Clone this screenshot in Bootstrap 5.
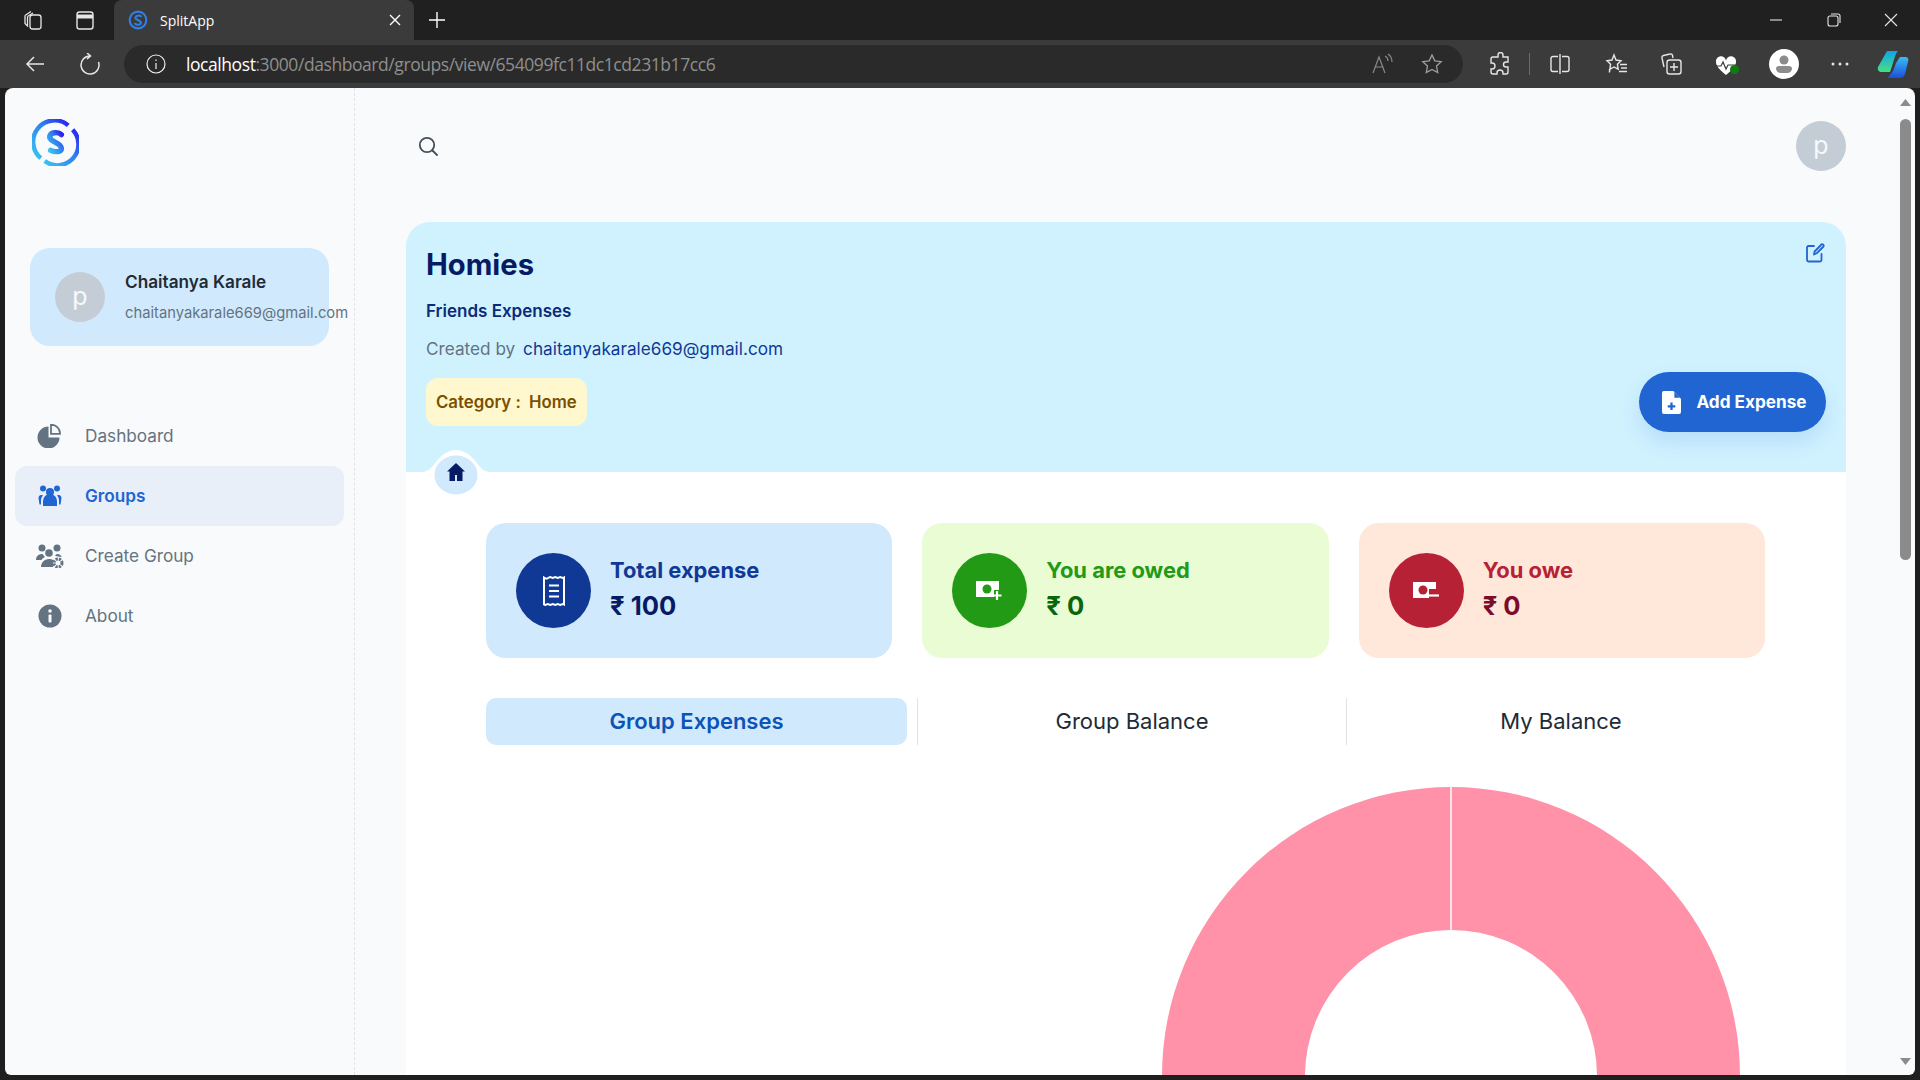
<!DOCTYPE html>
<html lang="en">
<head>
    <meta charset="UTF-8">
    <meta name="viewport" content="width=device-width, initial-scale=1">
    <title>SplitApp</title>
    <link href="https://cdn.jsdelivr.net/npm/bootstrap@5.3.0/dist/css/bootstrap.min.css" rel="stylesheet">
    <style>
        html, body { height: 1080px; overflow: hidden; }
        body { background: #1f1f1f; font-family: Inter, "Noto Sans", sans-serif; color: #212b36; }

        /* browser chrome */
        .tab-strip { height: 40px; background: #202020; color: #fff; font-family: "Open Sans", sans-serif; }
        .strip-btn { width: 22px; height: 22px; color: #e6e6e6; flex: none; }
        .sb-a { margin-left: 22px; }
        .sb-b { margin-left: 30px; }
        .browser-tab { width: 300px; height: 40px; margin-left: 18px; padding: 0 12px 0 14px; background: #3b3b3b; border-radius: 8px 8px 0 0; font-size: 14px; }
        .tab-title { margin-left: 12px; }
        .tab-new { margin-left: 14px; }
        .win-btns { margin-left: auto; width: 151px; padding-right: 22px; color: #e6e6e6; }
        .tool-bar { height: 48px; background: #3b3b3b; color: #e6e6e6; }
        .tb-back { margin-left: 24px; }
        .tb-reload { margin-left: 33px; }
        .addr-bar { width: 1339px; height: 38px; margin-left: 23px; padding: 0 14px 0 22px; background: #2a2a2a; border-radius: 19px; font-family: "Open Sans", sans-serif; font-size: 17.5px; letter-spacing: -.43px; color: #8f8f8f; }
        .addr-bar b { font-weight: 400; color: #fff; }
        .addr-info { margin-right: 20px; flex: none; }
        .addr-star { margin-left: 28px; margin-right: 6px; }
        .tool-set { width: 455px; }
        .ts-ext { margin-left: 24px; }
        .ts-sep { width: 1px; height: 22px; background: #6a6a6a; margin-left: 18px; }
        .ts-split { margin-left: 19px; }
        .ts-fav { margin-left: 34px; }
        .ts-coll { margin-left: 32px; }
        .ts-heart { margin-left: 32px; width: 24px; height: 24px; }
        .heart-ok { right: 0; bottom: 2px; width: 9px; height: 9px; background: #107c10; }
        .ts-prof { margin-left: 30px; width: 30px; height: 30px; }
        .ts-dots { margin-left: 32px; }
        .ts-copilot { margin-left: 28px; }

        /* page */
        .page-view { height: 987px; margin: 0 5px; background: #f9fafb; border-radius: 8px 8px 6px 6px; overflow: hidden; }
        .side-col { width: 350px; flex: none; border-right: 1px dashed #dfe3e8; }
        .brand-mark { display: block; margin: 31px 0 0 27px; }
        .user-box { width: 299px; height: 98px; margin: 82px 0 0 25px; padding-left: 25px; background: #d1e9fc; border-radius: 20px; }
        .ava { width: 50px; height: 50px; background: #c4cdd5; color: #f8f9fa; font-size: 25px; flex: none; }
        .user-text { margin-left: 20px; margin-top: 2px; }
        .user-name { font-size: 17.2px; font-weight: 600; line-height: 22px; margin-top: -1px; }
        .user-mail { font-size: 14.75px; line-height: 22px; margin-top: 9px; color: #637381; white-space: nowrap; }
        .side-menu { margin: 60px 0 0 10px; width: 329px; }
        .side-link { height: 60px; padding-left: 20px; font-size: 17.2px; color: #637381; border-radius: 12px; text-decoration: none; }
        .side-link svg { width: 30px; margin-right: 20px; flex: none; }
        .side-link.on { background: #e8eff9; color: #2065d1; font-weight: 600; }

        .main-col { flex: 1; min-width: 0; }
        .top-row { height: 134px; padding: 0 54px 18px 63px; }
        .group-card { margin: 0 54px 0 51px; background: #fff; border-radius: 24px 24px 0 0; height: 860px; }
        .group-head { height: 250px; padding: 21px 21px 40px 20px; background: #d0f2ff; border-radius: 24px 24px 0 0; }
        .group-name { font-size: 29.2px; line-height: 36px; font-weight: 700; color: #061b64; margin: 4px 0 0; }
        .group-sub { font-size: 17px; line-height: 22px; font-weight: 600; color: #0c2a7a; margin: 17px 0 0; }
        .group-by { font-size: 17.2px; line-height: 22px; color: #637381; margin: 16px 0 0; }
        .group-by span { color: #103996; margin-left: 3px; }
        .cat-tag { display: inline-block; margin-top: 18px; height: 48px; line-height: 48px; padding: 0 10px; background: #fff7cd; color: #7a4f01; border-radius: 12px; font-size: 16.8px; font-weight: 600; }
        .cat-tag span { margin-left: 4px; }
        .add-btn { width: 187px; height: 60px; padding: 0; margin-right: -1px; background: #2065d1; border: 0; border-radius: 30px; color: #fff; font-size: 17.2px; font-weight: 700; box-shadow: 0 10px 20px rgba(32,101,209,.14); }
        .add-btn:hover { background: #2065d1; color: #fff; }
        .add-btn svg { margin-right: 15px; margin-left: 4px; }
        .home-notch { position: absolute; left: 16px; top: 228px; }

        .stat-row { gap: 30px; margin: 51px 81px 0 80px; }
        .stat-box { flex: 1 1 0; height: 135px; padding-left: 30px; border-radius: 20px; }
        .stat-dot { width: 75px; height: 75px; margin-right: 19px; flex: none; color: #fff; }
        .stat-title { font-size: 21.9px; line-height: 28px; font-weight: 700; margin-top: -3px; }
        .stat-val { font-size: 25.6px; line-height: 32px; font-weight: 700; margin-top: 6px; }
        .st-blue { background: #d1e9fc; } .st-blue .stat-dot { background: #103996; } .st-blue .stat-title { color: #103996; } .st-blue .stat-val { color: #061b64; }
        .st-green { background: #e9fcd4; } .st-green .stat-dot { background: #229a16; } .st-green .stat-title { color: #229a16; } .st-green .stat-val { color: #08660d; }
        .st-red { background: #ffe7d9; } .st-red .stat-dot { background: #b72136; } .st-red .stat-title { color: #b72136; } .st-red .stat-val { color: #7a0c2e; }

        .tab-row { margin: 40px 71px 0 80px; height: 47px; display: grid; grid-template-columns: 431px 429px 429px; }
        .tab-cell { font-size: 22px; color: #212b36; text-align: center; line-height: 47px; border-left: 1px solid #dfe3e8; }
        .tab-cell.on { border-left: 0; margin-right: 10px; background: #d1e9fc; color: #0c53b7; font-weight: 600; border-radius: 10px; }
        .chart-wrap { margin: 41px 105px 0 0; }

        /* scrollbar */
        .scroll-col { width: 15px; flex: none; padding-right: 4px; }
        .scroll-up { margin-top: 10px; }
        .scroll-thumb { height: 441px; margin-top: 12px; background: #8b8b8b; border-radius: 6px; }
        .scroll-down { margin-top: 497px; }
    </style>
</head>
<body>
    <div class="tab-strip d-flex align-items-center">
        <svg class="strip-btn sb-a" viewBox="0 0 22 22" fill="none" stroke="currentColor" stroke-width="1.3"><path d="M3 6.500 9 2.500M3 6.500v8l3 3M5.500 7.500 11 4M5.500 7.500v9"/><rect x="8" y="6" width="11" height="14" rx="2.500"/></svg>
        <svg class="strip-btn sb-b" viewBox="0 0 22 22" fill="none" stroke="currentColor" stroke-width="1.4"><rect x="3" y="3" width="16" height="17" rx="2.500"/><path d="M3 7.500h16" stroke-width="4"/></svg>
        <div class="browser-tab d-flex align-items-center">
            <svg width="20" height="20" viewBox="0 0 48 48" fill="none" stroke-linecap="round"><circle cx="24" cy="24" r="20" stroke="#2f7fe8" stroke-width="5"/><path d="M31 15c-4-3-13-2-13 4s13 5 13 11-9 7-14 3" stroke="#2f7fe8" stroke-width="5"/></svg>
            <span class="tab-title">SplitApp</span>
            <svg class="ms-auto" width="14" height="14" viewBox="0 0 14 14" stroke="#fff" stroke-width="1.4"><path d="M2 2l10 10M12 2 2 12"/></svg>
        </div>
        <svg class="tab-new" width="18" height="18" viewBox="0 0 18 18" stroke="#fff" stroke-width="1.4"><path d="M9 1v16M1 9h16"/></svg>
        <div class="win-btns d-flex justify-content-between align-items-center">
            <svg width="14" height="14" viewBox="0 0 14 14" stroke="currentColor" stroke-width="1.1"><path d="M1 7h12"/></svg>
            <svg width="14" height="14" viewBox="0 0 14 14" fill="none" stroke="currentColor" stroke-width="1.1"><rect x="1" y="3" width="10" height="10" rx="2"/><path d="M4 1h7a2 2 0 0 1 2 2v7"/></svg>
            <svg width="14" height="14" viewBox="0 0 14 14" stroke="currentColor" stroke-width="1.1"><path d="M1 1l12 12M13 1 1 13"/></svg>
        </div>
    </div>

    <div class="tool-bar d-flex align-items-center">
        <svg class="tb-back" width="22" height="22" viewBox="0 0 22 22" fill="none" stroke="currentColor" stroke-width="1.5"><path d="M20 11H3M10 4l-7 7 7 7"/></svg>
        <svg class="tb-reload" width="22" height="22" viewBox="0 0 22 22" fill="none" stroke="currentColor" stroke-width="1.5"><path d="M19.500 9A9 9 0 1 1 11 3M8 0l3.500 3L8 6"/></svg>
        <div class="addr-bar d-flex align-items-center">
            <svg class="addr-info" width="20" height="20" viewBox="0 0 20 20" fill="none" stroke="#eee" stroke-width="1.2"><circle cx="10" cy="10" r="9"/><path d="M10 9v6M10 5.500v1.500"/></svg>
            <span><b>localhost</b>:3000/dashboard/groups/view/654099fc11dc1cd231b17cc6</span>
            <svg class="ms-auto" width="22" height="22" viewBox="0 0 22 22" fill="none" stroke="#8a8a8a" stroke-width="1.2"><path d="M2 20 8 4l6 16M4.500 14h7M14 3c2 1 3 3 3 5M17 1c3 2 4 4 4 8"/></svg>
            <svg class="addr-star" width="22" height="22" viewBox="0 0 22 22" fill="none" stroke="#a0a0a0" stroke-width="1.3"><path d="M11 2l2.800 5.900 6.400.8-4.700 4.400 1.200 6.400-5.700-3.100-5.700 3.100 1.200-6.400L1.800 8.700l6.400-.8z"/></svg>
        </div>
        <div class="tool-set d-flex align-items-center ms-auto">
            <svg class="ts-ext" width="22" height="24" viewBox="0 0 22 24" fill="none" stroke="currentColor" stroke-width="1.4"><path d="M9 3a2.500 2.500 0 0 1 5 0v2h5v5h-2a2.500 2.500 0 0 0 0 5h2v5a2 2 0 0 1-2 2h-3v-1a3 3 0 0 0-6 0v1H4a2 2 0 0 1-2-2v-3h1a3 3 0 0 0 0-6H2V7a2 2 0 0 1 2-2h5z"/></svg>
            <span class="ts-sep"></span>
            <svg class="ts-split" width="22" height="22" viewBox="0 0 22 22" fill="none" stroke="currentColor" stroke-width="1.4"><path d="M9 3.500H4a2 2 0 0 0-2 2v11a2 2 0 0 0 2 2h5M13 3.500h5a2 2 0 0 1 2 2v11a2 2 0 0 1-2 2h-5M11 1v20"/></svg>
            <svg class="ts-fav" width="23" height="23" viewBox="0 0 23 23" fill="none" stroke="currentColor" stroke-width="1.4"><path d="M9 2l2 5 5 .7-3.600 3.500.8 5L9 14l-4.400 2.500-.2 3 1.200-8.300L2 7.700 7 7zM15 11.500h7M16 15h6M14 18.500h8"/></svg>
            <svg class="ts-coll" width="23" height="24" viewBox="0 0 23 24" fill="none" stroke="currentColor" stroke-width="1.4"><path d="M4 15 2 6a2 2 0 0 1 1.500-2.500L10 2a2 2 0 0 1 2.500 1.500l.5 2.500"/><rect x="7" y="8" width="14" height="14" rx="2.500"/><path d="M14 11v8M10 15h8"/></svg>
            <span class="ts-heart position-relative d-inline-block">
                <svg width="22" height="22" viewBox="0 0 22 22"><path d="M11 20C5 15 1 11 1 7a5 5 0 0 1 10-1.500A5 5 0 0 1 21 7c0 4-4 8-10 13z" fill="#fff"/><path d="M1 11h5l2-4 3 7 2-4h8" fill="none" stroke="#3b3b3b" stroke-width="1.200"/></svg>
                <span class="heart-ok position-absolute rounded-circle"></span>
            </span>
            <span class="ts-prof rounded-circle bg-white d-flex align-items-center justify-content-center">
                <svg width="20" height="22" viewBox="0 0 20 22" fill="#8c8c8c"><circle cx="10" cy="7" r="4.500"/><path d="M2 15a3 3 0 0 1 3-2h10a3 3 0 0 1 3 2v1a5 5 0 0 1-5 4H7a5 5 0 0 1-5-4z"/></svg>
            </span>
            <svg class="ts-dots" width="18" height="6" viewBox="0 0 18 6" fill="#e6e6e6"><circle cx="2" cy="3" r="1.500"/><circle cx="9" cy="3" r="1.500"/><circle cx="16" cy="3" r="1.500"/></svg>
            <svg class="ts-copilot" width="32" height="30" viewBox="0 0 32 30">
                <defs>
                    <linearGradient id="coA" x1="0" y1="0" x2="0" y2="1"><stop offset="0" stop-color="#0ea5e9"/><stop offset="1" stop-color="#4ade80"/></linearGradient>
                    <linearGradient id="coB" x1="0" y1="0" x2="0" y2="1"><stop offset="0" stop-color="#38bdf8"/><stop offset="1" stop-color="#1d4ed8"/></linearGradient>
                </defs>
                <path d="M10 2h11c-2 2-3 5-5 12l-3 9H5c-3 0-5-2-4-5z" fill="url(#coA)"/>
                <path d="M23 8h5c3 0 4 2 3 5l-3 12c-1 3-3 4-6 4H10l3-3c3-3 4-6 6-12z" fill="url(#coB)"/>
            </svg>
        </div>
    </div>

    <div class="page-view d-flex">
        <aside class="side-col">
            <svg class="brand-mark" width="47" height="47" viewBox="0 0 48 48" fill="none">
                <defs>
                    <linearGradient id="logoG" x1="0" y1="1" x2="1" y2="0"><stop offset="0" stop-color="#38c6f4"/><stop offset=".6" stop-color="#2f7cf0"/><stop offset="1" stop-color="#2a1cf0"/></linearGradient>
                </defs>
                <path d="M9 40A21.500 21.500 0 0 1 37 6.500" stroke="url(#logoG)" stroke-width="4.500"/>
                <path d="M41.500 11A21.500 21.500 0 0 1 13 43" stroke="url(#logoG)" stroke-width="4.500"/>
                <path d="M30 16c-3-3-11-3-12 2-.8 5 12 6 12 12 0 4-7 4-11 2" stroke="url(#logoG)" stroke-width="5.500" stroke-linecap="round"/>
            </svg>
            <div class="user-box d-flex align-items-center">
                <div class="ava rounded-circle d-flex align-items-center justify-content-center">p</div>
                <div class="user-text">
                    <div class="user-name">Chaitanya Karale</div>
                    <div class="user-mail">chaitanyakarale669@gmail.com</div>
                </div>
            </div>
            <nav class="side-menu d-flex flex-column">
                <a class="side-link d-flex align-items-center" href="#">
                    <svg height="24" viewBox="0 0 30 24" fill="currentColor"><path d="M13.500 2.500v11h11a11 11 0 1 1-11-11z"/><path d="M16 .8a8.500 8.500 0 0 1 9 9h-9z" fill="none" stroke="currentColor" stroke-width="1.800"/></svg>
                    Dashboard
                </a>
                <a class="side-link on d-flex align-items-center" href="#">
                    <svg height="22" viewBox="0 0 30 22" fill="currentColor"><circle cx="8" cy="3.500" r="3"/><circle cx="22" cy="3.500" r="3"/><circle cx="15" cy="7" r="4"/><path d="M8 21v-5a7 7 0 0 1 14 0v5z"/><path d="M4.500 19.500H6v-4c0-2 .8-4 2-5-3-1.500-4.500 1-4.500 2.500zM25.500 19.500H24v-4c0-2-.8-4-2-5 3-1.500 4.500 1 4.500 2.500z"/></svg>
                    Groups
                </a>
                <a class="side-link d-flex align-items-center" href="#">
                    <svg height="24" viewBox="0 0 30 24" fill="currentColor"><circle cx="7" cy="4" r="3.500"/><circle cx="22" cy="4" r="3.500"/><circle cx="14" cy="9" r="3.800"/><path d="M1 16c0-4 3-6 6-6 1.500 0 1.500 2 3 3-2 .8-3 2-3.500 3zM20 12c1-1 1-2 2-2 3 0 4 1.500 5 3z"/><path d="M6 23c0-4 3-8 8-8 2 0 3 .5 4 1v7z"/><circle cx="23" cy="19" r="4" fill="none" stroke="currentColor" stroke-width="3" stroke-dasharray="2.200 1"/></svg>
                    Create Group
                </a>
                <a class="side-link d-flex align-items-center" href="#">
                    <svg height="24" viewBox="0 0 30 24"><circle cx="15" cy="12" r="11.500" fill="currentColor"/><rect x="13.500" y="10.500" width="3" height="8" rx="1" fill="#f9fafb"/><circle cx="15" cy="7" r="1.800" fill="#f9fafb"/></svg>
                    About
                </a>
            </nav>
        </aside>

        <main class="main-col">
            <div class="top-row d-flex align-items-center justify-content-between">
                <svg width="20" height="20" viewBox="0 0 20 20" fill="none" stroke="#454f5b" stroke-width="1.800" stroke-linecap="round"><circle cx="9" cy="9" r="7.200"/><path d="M14.500 14.500 19 19"/></svg>
                <div class="ava rounded-circle d-flex align-items-center justify-content-center">p</div>
            </div>

            <section class="group-card position-relative">
                <div class="group-head d-flex justify-content-between">
                    <div>
                        <h1 class="group-name">Homies</h1>
                        <p class="group-sub">Friends Expenses</p>
                        <p class="group-by">Created by <span>chaitanyakarale669@gmail.com</span></p>
                        <div class="cat-tag">Category : <span>Home</span></div>
                    </div>
                    <div class="d-flex flex-column align-items-end justify-content-between">
                        <svg width="20" height="20" viewBox="0 0 20 20" fill="none" stroke="#2065d1" stroke-width="1.800" stroke-linecap="round" stroke-linejoin="round"><path d="M9 3H3.500A1.500 1.500 0 0 0 2 4.500V17a1.500 1.500 0 0 0 1.500 1.500H15a1.500 1.500 0 0 0 1.500-1.500v-6"/><path d="M9 11.500l.6-3L16 2a1.400 1.400 0 0 1 2.500 1.500L12 10z"/></svg>
                        <button type="button" class="btn add-btn d-flex align-items-center justify-content-center">
                            <svg width="19" height="23" viewBox="0 0 20 24"><path d="M2 0h10l8 8v14a2 2 0 0 1-2 2H2a2 2 0 0 1-2-2V2a2 2 0 0 1 2-2z" fill="#fff"/><path d="M13 1l6 6h-6z" fill="#2065d1"/><path d="M10 12v8M6 16h8" stroke="#2065d1" stroke-width="2.400"/></svg>
                            Add Expense
                        </button>
                    </div>
                </div>
                <svg class="home-notch" width="68" height="50" viewBox="0 0 68 50">
                    <path d="M0 22c6 0 10-5 14-10C20 4 27 0 34 0s14 4 20 12c4 5 8 10 14 10v2H0z" fill="#fff"/>
                    <ellipse cx="34" cy="25" rx="21.500" ry="19.500" fill="#d1e9fc"/>
                    <path d="M34 13 25 21.500h2.500V31h5.500v-6h2v6h5.500v-9.500H43z" fill="#061b64"/>
                </svg>

                <div class="stat-row d-flex">
                    <div class="stat-box st-blue d-flex align-items-center">
                        <div class="stat-dot rounded-circle d-flex align-items-center justify-content-center">
                            <svg width="22" height="30" viewBox="0 0 22 30" fill="none" stroke="#fff" stroke-width="2"><path d="M1 1.500c2.500 1.500 2.500 1.500 5 0s2.500 1.500 5 0 2.500 1.500 5 0 2.500 1.500 5 0v27c-2.500-1.500-2.500 1.500-5 0s-2.500 1.500-5 0-2.500 1.500-5 0-2.500 1.500-5 0z"/><path d="M6 9.500h10M6 15h10M6 20.500h10"/></svg>
                        </div>
                        <div>
                            <div class="stat-title">Total expense</div>
                            <div class="stat-val">₹ 100</div>
                        </div>
                    </div>
                    <div class="stat-box st-green d-flex align-items-center">
                        <div class="stat-dot rounded-circle d-flex align-items-center justify-content-center">
                            <svg width="27" height="20" viewBox="0 0 27 20"><path d="M0 0h23v9h-5v7H0z" fill="#fff"/><circle cx="11" cy="8" r="4.500" fill="#229a16"/><path d="M21 10v9M16.500 14.500h9" stroke="#fff" stroke-width="2.200"/></svg>
                        </div>
                        <div>
                            <div class="stat-title">You are owed</div>
                            <div class="stat-val">₹ 0</div>
                        </div>
                    </div>
                    <div class="stat-box st-red d-flex align-items-center">
                        <div class="stat-dot rounded-circle d-flex align-items-center justify-content-center">
                            <svg width="26" height="18" viewBox="0 0 26 18"><path d="M0 0h23v7h-7v9H0z" fill="#fff"/><circle cx="10" cy="8" r="4.500" fill="#b72136"/><path d="M15 13.500h11" stroke="#fff" stroke-width="2.200"/></svg>
                        </div>
                        <div>
                            <div class="stat-title">You owe</div>
                            <div class="stat-val">₹ 0</div>
                        </div>
                    </div>
                </div>

                <div class="tab-row">
                    <div class="tab-cell on">Group Expenses</div>
                    <div class="tab-cell">Group Balance</div>
                    <div class="tab-cell">My Balance</div>
                </div>

                <div class="chart-wrap d-flex justify-content-end">
                    <svg width="580" height="290" viewBox="0 0 580 290">
                        <path d="M1 290A289 289 0 0 1 290 1V144A146 146 0 0 0 144 290Z" fill="#ff91a9"/>
                        <path d="M579 290A289 289 0 0 0 290 1V144A146 146 0 0 1 436 290Z" fill="#ff91a9"/>
                        <path d="M290 1V144" stroke="#fff" stroke-width="1.500"/>
                    </svg>
                </div>
            </section>
        </main>

        <div class="scroll-col">
            <svg class="scroll-up d-block" width="11" height="9" viewBox="0 0 11 9"><path d="M5.500 1 11 8H0z" fill="#8b8b8b"/></svg>
            <div class="scroll-thumb"></div>
            <svg class="scroll-down d-block" width="11" height="9" viewBox="0 0 11 9"><path d="M5.500 8 11 1H0z" fill="#8b8b8b"/></svg>
        </div>
    </div>

    <script src="https://cdn.jsdelivr.net/npm/bootstrap@5.3.0/dist/js/bootstrap.bundle.min.js"></script>
</body>
</html>
